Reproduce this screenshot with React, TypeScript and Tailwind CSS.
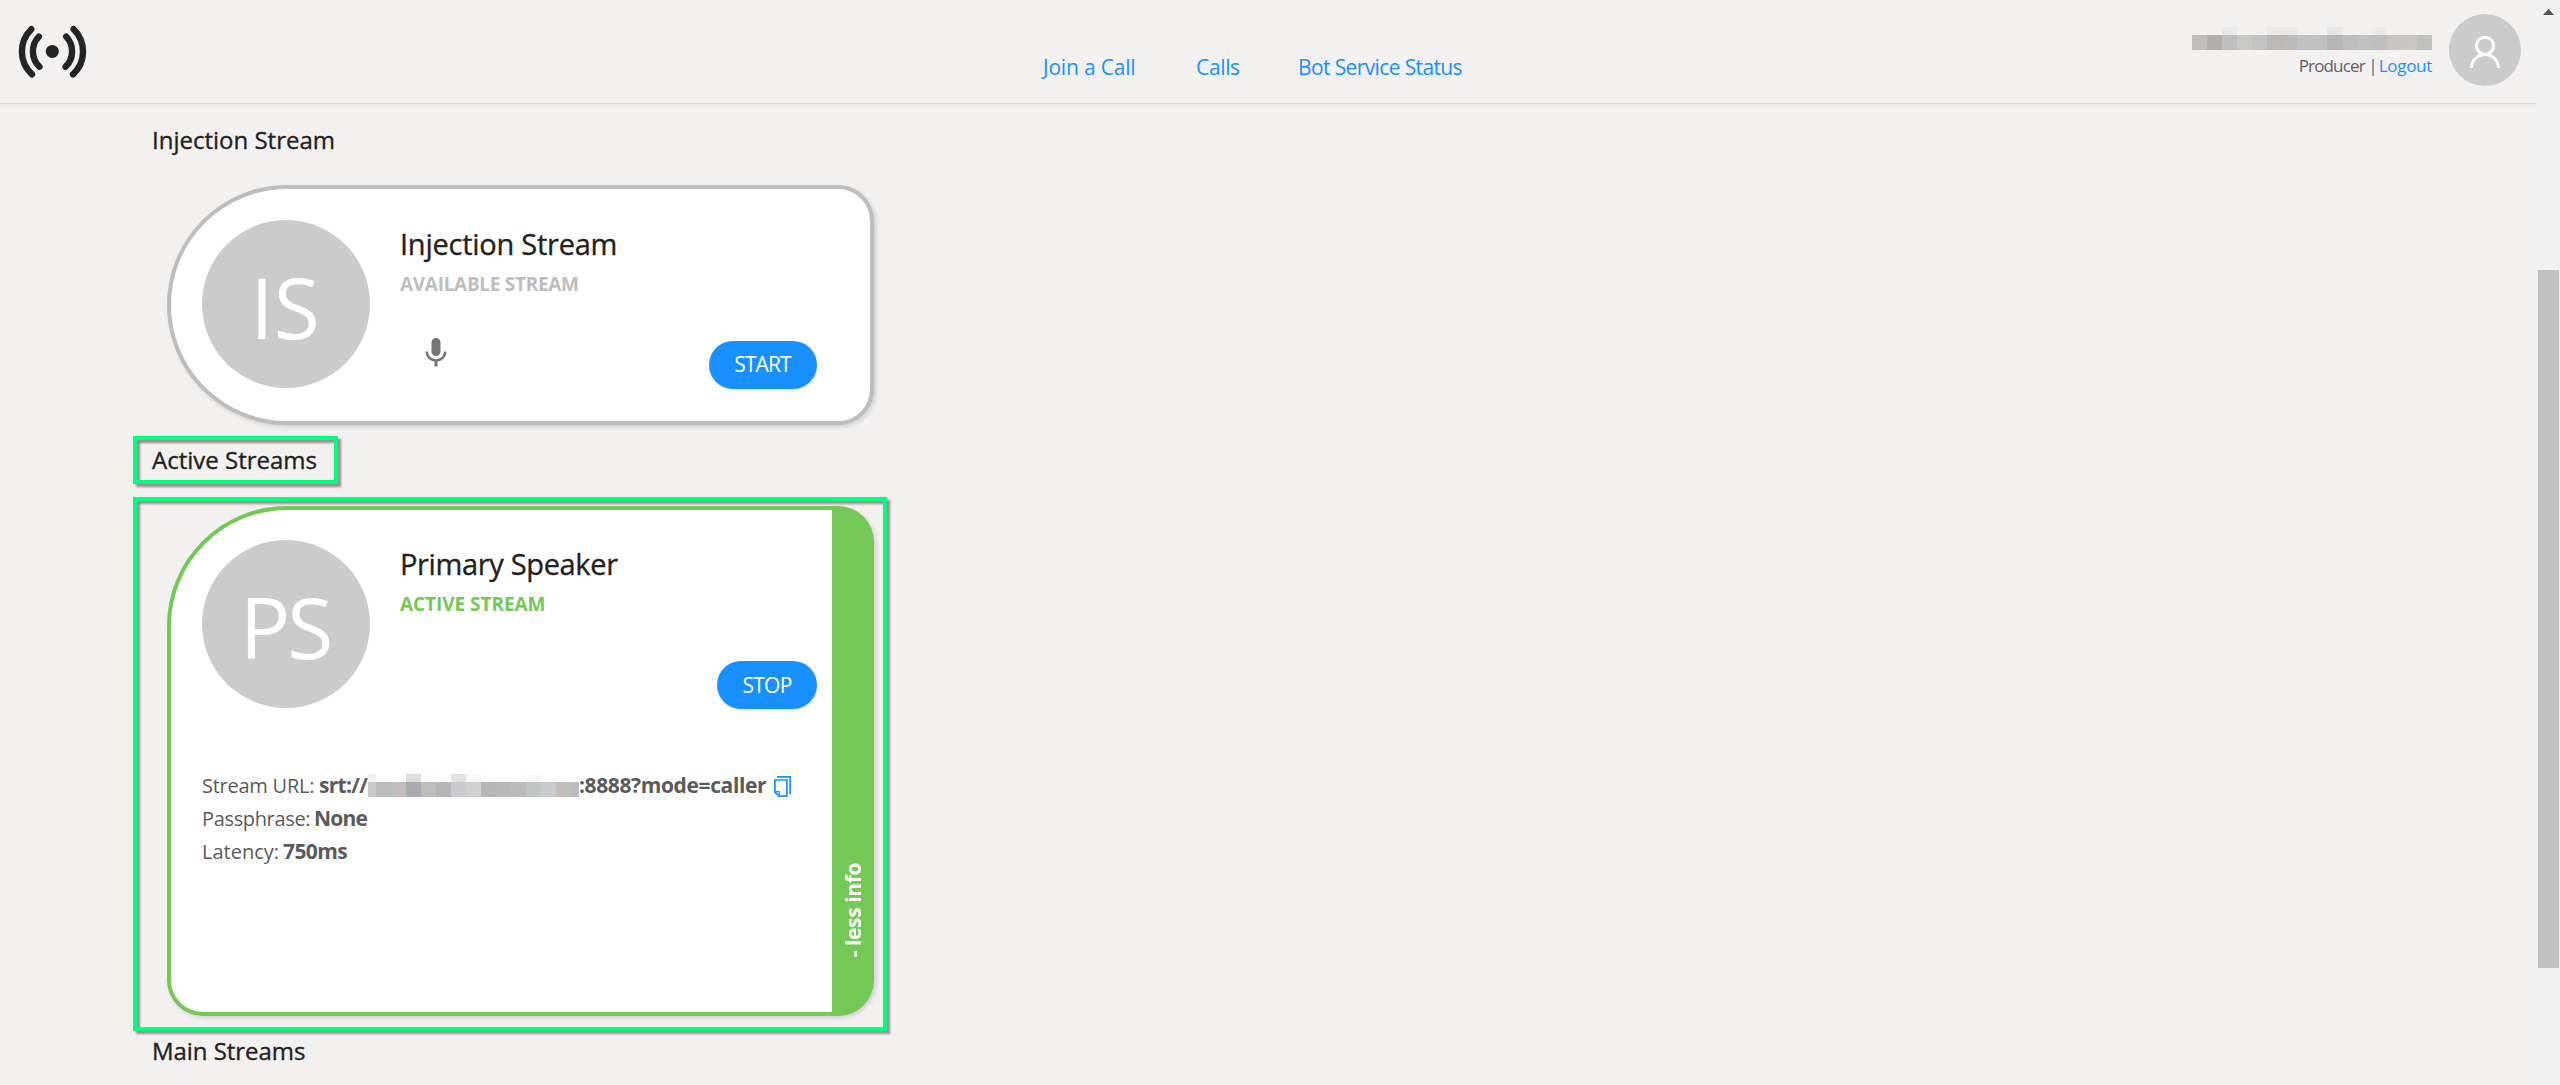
import type { ReactNode } from "react";

const FONT = "font-['Open_Sans','Noto_Sans',sans-serif]";

function Logo() {
  return (
    <svg className="ml-4 mt-5 h-[62px] w-[72px] shrink-0" viewBox="16 20 72 62" fill="none" stroke="#242424" strokeWidth="6.4" strokeLinecap="round">
      <path d="M31.3 29.2A31 31 0 0 0 32 74.3" />
      <path d="M38.8 36.6A21.5 21.5 0 0 0 39.4 66.8" />
      <path d="M73.6 29.2A31 31 0 0 1 73 74.3" />
      <path d="M66.2 36.6A21.5 21.5 0 0 1 65.6 66.8" />
      <circle cx="52.3" cy="51.4" r="6.5" fill="#242424" stroke="none" />
    </svg>
  );
}

function UserIcon() {
  return (
    <svg className="h-[72px] w-[72px]" viewBox="0 0 72 72" fill="none" stroke="#fff" strokeWidth="2.9">
      <circle cx="36" cy="31.8" r="8.6" />
      <path d="M22.5 54a13.5 13.5 0 0 1 27 0" />
    </svg>
  );
}

function MicIcon() {
  return (
    <svg className="h-9 w-9" viewBox="0 0 24 24" fill="#757575">
      <path d="M12 14c1.66 0 2.99-1.34 2.99-3L15 5c0-1.66-1.34-3-3-3S9 3.34 9 5v6c0 1.66 1.34 3 3 3zm5.3-3c0 3-2.54 5.1-5.3 5.1S6.7 14 6.7 11H5c0 3.41 2.72 6.23 6 6.72V21h2v-3.28c3.28-.48 6-3.3 6-6.72h-1.7z" />
    </svg>
  );
}

function CopyIcon() {
  return (
    <svg className="h-[21px] w-[17px]" viewBox="0 0 17 21" fill="none" stroke="#1890ff" strokeWidth="1.7">
      <path d="M3 .9h13.1v17.3" />
      <path d="M.9 4h12v16.1H4.9l-4-4z" />
      <path d="M.9 15.6h4.2v4.5" strokeWidth="1.4" />
    </svg>
  );
}

type Cell = { c: string; w?: number; t?: string };

function Mosaic({ cells }: { cells: Cell[] }) {
  return (
    <div className="flex h-[23px] shrink-0">
      {cells.map((cell, i) => (
        <div key={i} style={{ width: cell.w ?? 15 }}>
          <div className="h-2" style={{ background: cell.t }} />
          <div className="h-[15px]" style={{ background: cell.c }} />
        </div>
      ))}
    </div>
  );
}

const USER_CELLS: Cell[] = [
  { c: "#bfbebd" }, { c: "#b1b0ae" }, { c: "#bfbebd", t: "#e9e9e9" }, { c: "#c9c8c6" }, { c: "#c2c3c3" },
  { c: "#bab9b7", t: "#e9e9e8" }, { c: "#bcbbb9", t: "#e9e8e7" }, { c: "#c2c1c1", t: "#f1f0f0" }, { c: "#c0c1c2" },
  { c: "#b7b6b5", t: "#e6e7e8" }, { c: "#bdbdbd" }, { c: "#c0c1c3" }, { c: "#c0bebc", t: "#eaeae9" }, { c: "#c6c5c3" },
  { c: "#c7c6c4" }, { c: "#c0c0bf" },
];

const HOST_CELLS: Cell[] = [
  { c: "#cac8c7", w: 8, t: "#eef2f6" }, { c: "#babcbe" }, { c: "#c2bcbc" }, { c: "#a9a9af", t: "#dedcdf" },
  { c: "#bdbdbd", t: "#fcfefe" }, { c: "#b5b5b5" }, { c: "#cacbce", t: "#e2e2e2" }, { c: "#d1d0cc", t: "#f8f8f7" },
  { c: "#b6b6b6" }, { c: "#b8b9b4" }, { c: "#babbbf" }, { c: "#c3c5c4", t: "#f7faf9" }, { c: "#c9cbce" },
  { c: "#c2bfbb" }, { c: "#b9bbc0", w: 8 },
];

function Header() {
  return (
    <header className="flex h-[104px] shrink-0 border-b border-[#dcdbda] shadow-[0_2px_4px_rgba(0,0,0,0.03)]">
      <Logo />
      <nav className="ml-[955px] mt-[52px] flex text-[21px] leading-[30px] whitespace-nowrap text-[#1890ff]">
        <a className="w-[153px] tracking-[-0.2px]">Join a Call</a>
        <a className="w-[102px] tracking-[-0.35px]">Calls</a>
        <a className="tracking-[-0.62px]">Bot Service Status</a>
      </nav>
      <div className="mt-[27px] ml-auto flex flex-col items-end">
        <Mosaic cells={USER_CELLS} />
        <div className="mt-[3px] flex text-[17px] leading-[26px] whitespace-nowrap text-[#5f5f5f]">
          <span className="tracking-[-0.85px]">Producer</span>
          <span className="mr-[5px] ml-[7px] mt-[6px] h-[17px] w-[2px] bg-[#9b9a99]" />
          <a className="tracking-[-0.3px] text-[#1890ff]">Logout</a>
        </div>
      </div>
      <div className="mt-[14px] mr-[15px] ml-[17px] size-[72px] rounded-full bg-[#cbcbcb]">
        <UserIcon />
      </div>
    </header>
  );
}

function Heading({ className, children }: { className: string; children: ReactNode }) {
  return (
    <h2 className={`ml-[152px] text-[24px] leading-9 font-medium text-[#222] [-webkit-text-stroke:0.35px_#222] ${className}`}>
      {children}
    </h2>
  );
}

function Avatar({ className, children }: { className: string; children: ReactNode }) {
  return (
    <div className={`flex size-[168px] shrink-0 items-center justify-center rounded-full bg-[#cbcbcb] pt-[5px] text-[84px] leading-none text-white ${className}`}>
      {children}
    </div>
  );
}

function CardTitle({ className, children }: { className: string; children: ReactNode }) {
  return (
    <h3 className={`mt-[6px] text-[29px] leading-9 font-medium text-[#222] [-webkit-text-stroke:0.35px_#222] ${className}`}>
      {children}
    </h3>
  );
}

function ActionButton({ className, children }: { className: string; children: ReactNode }) {
  return (
    <button className={`mt-[6px] ml-auto flex h-12 items-center justify-center rounded-full bg-[#1890ff] text-[21px] text-white shadow-[0_3px_0_rgba(0,0,0,0.045)] ${className}`}>
      {children}
    </button>
  );
}

function InjectionCard() {
  return (
    <section className="mt-[27px] ml-[167px] flex h-[240px] w-[707px] gap-[30px] rounded-l-[120px] rounded-r-[36px] border-4 border-[#bdbdbd] bg-white pt-[31px] pl-[31px] shadow-[2px_2px_4px_rgba(0,0,0,0.14)]">
      <Avatar className="pr-[2px]">IS</Avatar>
      <div className="flex w-[417px] flex-col">
        <CardTitle className="tracking-[-0.25px]">Injection Stream</CardTitle>
        <p className="mt-2 text-[19px] leading-7 font-bold tracking-[-0.3px] text-[#bdbdbd]">AVAILABLE STREAM</p>
        <div className="mt-[37px] flex items-start pl-[18px]">
          <MicIcon />
          <ActionButton className="w-[108px] pr-px tracking-[-0.9px]">START</ActionButton>
        </div>
      </div>
    </section>
  );
}

function SpeakerCard() {
  return (
    <section className="mt-7 ml-[167px] flex h-[510px] w-[707px] rounded-[36px] rounded-tl-[120px] bg-[#73c856] py-1 pl-1 shadow-[2px_2px_4px_rgba(0,0,0,0.14)]">
      <div className="w-[661px] rounded-tl-[116px] rounded-bl-[32px] bg-white pt-[30px] pl-[31px]">
        <div className="flex h-[169px] gap-[30px]">
          <Avatar className="pr-[2px] tracking-[-3px]">PS</Avatar>
          <div className="flex w-[417px] flex-col">
            <CardTitle className="tracking-[-0.35px]">Primary Speaker</CardTitle>
            <p className="mt-2 text-[19px] leading-7 font-bold tracking-[-0.05px] text-[#73c856]">ACTIVE STREAM</p>
            <div className="mt-[37px] flex">
              <ActionButton className="w-[100px] pt-px tracking-[-0.7px]">STOP</ActionButton>
            </div>
          </div>
        </div>
        <div className="mt-[60px] text-[21px] leading-[33px] whitespace-nowrap text-[#5a5a5a]">
          <div className="flex">
            <span className="w-[117px] shrink-0 text-[20px] tracking-[-0.25px]">Stream URL:</span>
            <b className="w-[49px] shrink-0 tracking-[-0.7px]">srt://</b>
            <div className="mt-[5px]">
              <Mosaic cells={HOST_CELLS} />
            </div>
            <b className="w-[195px] shrink-0 tracking-[-0.38px]">:8888?mode=caller</b>
            <span className="mt-[7px]">
              <CopyIcon />
            </span>
          </div>
          <div className="flex">
            <span className="w-[112px] shrink-0 text-[20px] tracking-[-0.35px]">Passphrase:</span>
            <b className="tracking-[-0.8px]">None</b>
          </div>
          <div className="flex">
            <span className="w-[81px] shrink-0 text-[20px]">Latency:</span>
            <b className="tracking-[-0.6px]">750ms</b>
          </div>
        </div>
      </div>
      <div className="flex w-[42px] items-end justify-center pb-[55px]">
        <span className="rotate-180 text-[21px] leading-[42px] font-bold tracking-[-0.4px] whitespace-nowrap text-white [writing-mode:vertical-rl]">
          - less info
        </span>
      </div>
    </section>
  );
}

function Scrollbar() {
  return (
    <aside className="flex w-6 shrink-0 flex-col items-end bg-[#f0f0f0]">
      <svg className="mt-[9px] mr-[6px] h-[6px] w-[11px]" viewBox="0 0 11 6">
        <path d="M0 6L5.5 0 11 6z" fill="#505050" />
      </svg>
      <div className="mt-[255px] mr-px h-[698px] w-[21px] bg-[#c1c1c1]" />
    </aside>
  );
}

export default function App() {
  return (
    <div className={`relative flex h-[1085px] w-[2560px] overflow-hidden bg-[#f3f1f0] ${FONT}`}>
      <div className="flex flex-1 flex-col">
        <Header />
        <main>
          <Heading className="mt-[18px]">Injection Stream</Heading>
          <InjectionCard />
          <Heading className="mt-[17px]">Active Streams</Heading>
          <SpeakerCard />
          <Heading className="mt-[17px] tracking-[-0.05px]">Main Streams</Heading>
        </main>
      </div>
      <Scrollbar />
      <div className="absolute top-[436px] left-[133px] h-12 w-[205px] border-4 border-[#00ff80] drop-shadow-[3px_3px_1px_rgba(70,55,55,0.55)]" />
      <div className="absolute top-[497px] left-[133px] h-[534px] w-[754px] border-4 border-[#00ff80] drop-shadow-[3px_3px_1px_rgba(70,55,55,0.55)]" />
    </div>
  );
}
